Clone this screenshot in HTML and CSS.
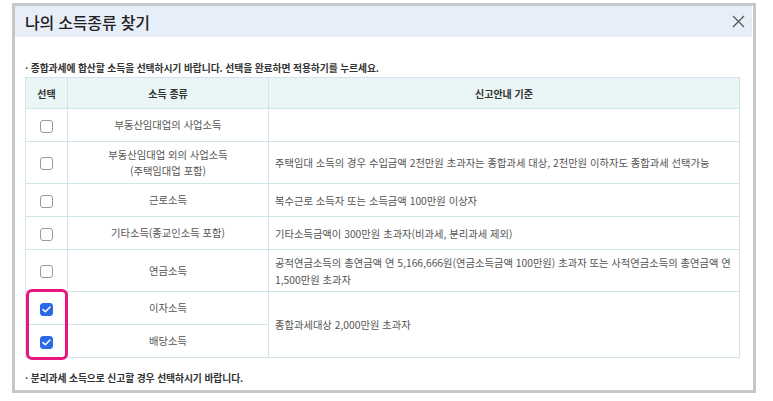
FILE: index.html
```html
<!DOCTYPE html>
<html lang="ko">
<head>
<meta charset="utf-8">
<link rel="stylesheet" href="styles.css">
</head>
<body>
<div class="modal">
  <div class="modal-head">
    <h1 class="title">나의 소득종류 찾기</h1>
    <span class="close">
      <svg width="13" height="13" viewBox="0 0 13 13"><path d="M1 1L12 12M12 1L1 12" stroke="#555" stroke-width="1.3" fill="none"/></svg>
    </span>
  </div>
  <div class="modal-body">
    <p class="note">· 종합과세에 합산할 소득을 선택하시기 바랍니다. 선택을 완료하면 적용하기를 누르세요.</p>
    <div class="table-wrap">
      <table class="grid">
        <colgroup><col class="c1"><col class="c2"><col class="c3"></colgroup>
        <thead>
          <tr><th>선택</th><th>소득 종류</th><th>신고안내 기준</th></tr>
        </thead>
        <tbody>
          <tr class="r-s"><td class="chk"><span class="box"></span></td><td class="kind">부동산임대업의 사업소득</td><td class="desc"></td></tr>
          <tr class="r-l"><td class="chk"><span class="box"></span></td><td class="kind">부동산임대업 외의 사업소득<br>(주택임대업 포함)</td><td class="desc">주택임대 소득의 경우 수입금액 2천만원 초과자는 종합과세 대상, 2천만원 이하자도 종합과세 선택가능</td></tr>
          <tr class="r-s"><td class="chk"><span class="box"></span></td><td class="kind">근로소득</td><td class="desc">복수근로 소득자 또는 소득금액 100만원 이상자</td></tr>
          <tr class="r-s"><td class="chk"><span class="box"></span></td><td class="kind">기타소득(종교인소득 포함)</td><td class="desc">기타소득금액이 300만원 초과자(비과세, 분리과세 제외)</td></tr>
          <tr class="r-l"><td class="chk"><span class="box"></span></td><td class="kind">연금소득</td><td class="desc">공적연금소득의 총연금액 연 5,166,666원(연금소득금액 100만원) 초과자 또는 사적연금소득의 총연금액 연 1,500만원 초과자</td></tr>
          <tr class="r-s"><td class="chk"><span class="box on"><svg width="9" height="7" viewBox="0 0 9 7"><path d="M1 3.6L3.4 5.8L8 1" stroke="#fff" stroke-width="1.5" fill="none" stroke-linecap="round" stroke-linejoin="round"/></svg></span></td><td class="kind">이자소득</td><td class="desc" rowspan="2">종합과세대상 2,000만원 초과자</td></tr>
          <tr class="r-s"><td class="chk"><span class="box on"><svg width="9" height="7" viewBox="0 0 9 7"><path d="M1 3.6L3.4 5.8L8 1" stroke="#fff" stroke-width="1.5" fill="none" stroke-linecap="round" stroke-linejoin="round"/></svg></span></td><td class="kind">배당소득</td></tr>
        </tbody>
      </table>
      <div class="highlight"></div>
    </div>
    <p class="note note-bottom">· 분리과세 소득으로 신고할 경우 선택하시기 바랍니다.</p>
  </div>
</div>
</body>
</html>
```

FILE: styles.css
```css
html, body {
  margin: 0;
  padding: 0;
  background: #fff;
}
body {
  font-family: "Noto Sans CJK KR", "Noto Sans", sans-serif;
  color: #444;
}
.modal {
  margin: 3px 0 0 12px;
  width: 744px;
  height: 390px;
  box-sizing: border-box;
  border: 3px solid #c6c7c9;
  background: #fff;
}
.modal-head {
  height: 31px;
  background: #e8eef8;
  display: flex;
  align-items: center;
  justify-content: space-between;
  padding: 0 7px 0 10px;
  margin-right: 1px;
}
.title {
  margin: 0;
  font-size: 16px;
  font-weight: 500;
  color: #222;
  letter-spacing: -0.2px;
}
.close {
  display: flex;
  align-items: center;
}
.modal-body {
  padding: 24px 13px 0 10px;
}
.note {
  margin: 0;
  font-size: 9.8px;
  line-height: 14px;
  font-weight: 700;
  color: #333;
  letter-spacing: -0.1px;
}
.table-wrap {
  position: relative;
  margin-top: 2px;
}
.grid {
  width: 715px;
  border-collapse: collapse;
  table-layout: fixed;
  font-size: 10.3px;
  color: #555;
  word-break: keep-all;
}
.c1 { width: 42px; }
.c2 { width: 201px; }
.grid th, .grid td {
  border: 1px solid #d2e5ea;
  padding: 0;
  vertical-align: middle;
}
.grid th {
  height: 30px;
  background: #eaf5f5;
  font-weight: 700;
  font-size: 10px;
  color: #333;
}
.r-s td { height: 32px; }
.r-l td { height: 41px; }
.chk { text-align: center; }
.kind { text-align: center; line-height: 16px; }
.desc { padding: 0 6px !important; line-height: 17px; }
.box {
  display: inline-flex;
  align-items: center;
  justify-content: center;
  width: 13px;
  height: 13px;
  box-sizing: border-box;
  border: 1px solid #9a9a9a;
  border-radius: 3px;
  vertical-align: middle;
  background: #fff;
}
.box.on {
  background: #2a6ae6;
  border-color: #2a6ae6;
}
.highlight {
  position: absolute;
  left: 1px;
  top: 212px;
  width: 42px;
  height: 71px;
  box-sizing: border-box;
  border: 3px solid #e8157f;
  border-radius: 6px;
}
.note-bottom {
  margin-top: 13px;
}
```
